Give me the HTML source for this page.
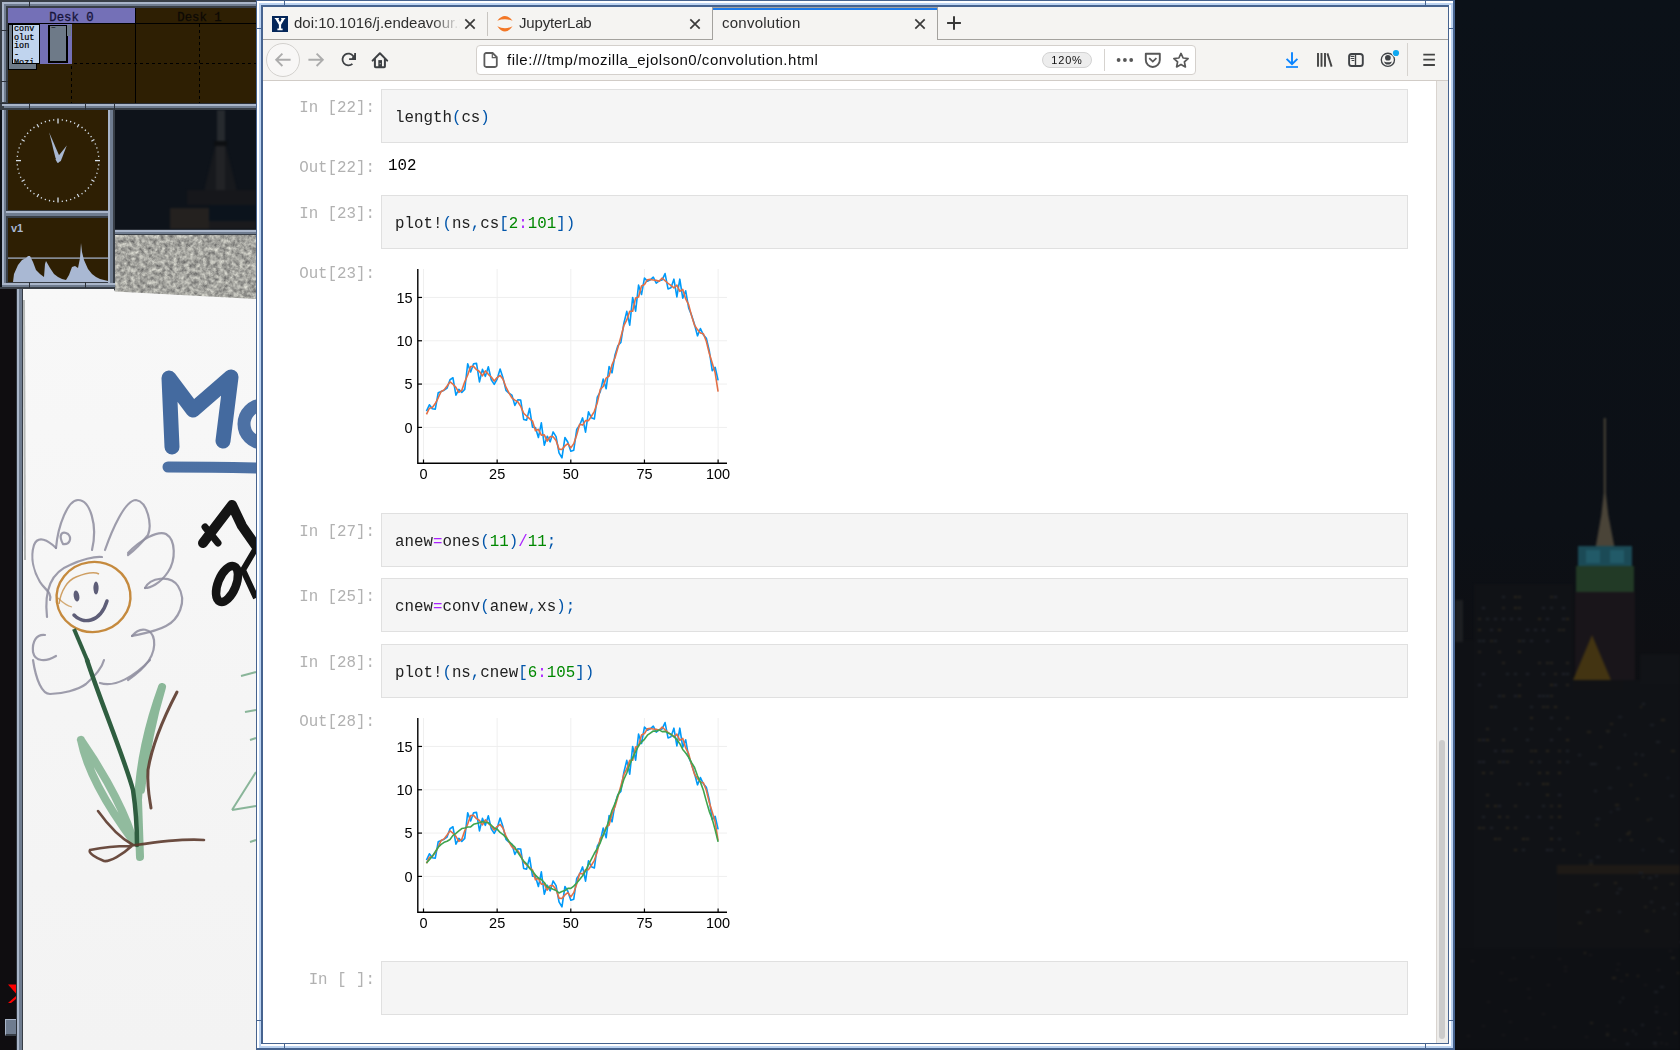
<!DOCTYPE html>
<html><head><meta charset="utf-8">
<style>
html,body{margin:0;padding:0;}
body{width:1680px;height:1050px;overflow:hidden;position:relative;background:#0b1017;font-family:"Liberation Sans",sans-serif;-webkit-font-smoothing:antialiased;}
body>div,#L>div{position:absolute;}
.mono{font-family:"Liberation Mono",monospace;}
.p,.ct,.tt,.ut,.zt{will-change:transform;}
.p{position:absolute;font-family:"Liberation Mono",monospace;font-size:15.8px;color:#b1b1b1;white-space:pre;text-align:right;width:120px;line-height:20px;}
.cb{position:absolute;left:381px;width:1025px;height:52px;background:#f5f5f5;border:1px solid #e0e0e0;}
.ct{position:absolute;left:395px;font-family:"Liberation Mono",monospace;font-size:15.8px;color:#212121;white-space:pre;line-height:20px;}
.tt{position:absolute;font-size:15px;color:#2e2e2e;white-space:nowrap;overflow:hidden;line-height:18px;}
.ut{position:absolute;font-size:15px;letter-spacing:0.51px;color:#0c0c0d;white-space:nowrap;line-height:18px;}
.zt{position:absolute;font-size:11px;letter-spacing:0.8px;color:#111;text-align:center;line-height:16px;}
.pu{color:#0055aa}.nu{color:#008800}.op{color:#aa22ff}
</style></head><body>
<div style="left:0px;top:0px;width:256px;height:1050px;background:#0c1016;"></div>
<div style="left:0px;top:0px;width:256px;height:110px;background:#383e46;"></div>
<div style="left:2px;top:2px;width:254px;height:2px;background:#a9b5c9;"></div>
<div style="left:2px;top:2px;width:2px;height:100px;background:#a9b5c9;"></div>
<div style="left:4px;top:4px;width:252px;height:2px;background:#6f7c8f;"></div>
<div style="left:4px;top:4px;width:2px;height:98px;background:#6f7c8f;"></div>
<div style="left:6px;top:6px;width:250px;height:2px;background:#383e46;"></div>
<div style="left:29px;top:1px;width:1px;height:6px;background:#2b3038;"></div>
<div style="left:1px;top:30px;width:7px;height:1px;background:#2b3038;"></div>
<div style="left:1px;top:81px;width:7px;height:1px;background:#2b3038;"></div>
<div style="left:8px;top:8px;width:248px;height:95px;background:#2e1f03;"></div>
<div style="left:8px;top:8px;width:127px;height:15px;background:#7470b7;"></div>
<div style="left:8px;top:23px;width:248px;height:1px;background:#000;"></div>
<div style="left:135px;top:8px;width:1px;height:95px;background:#000;"></div>
<div style="left:8px;top:9.5px;width:127px;text-align:center;font-family:'Liberation Mono',monospace;font-size:12.3px;line-height:16px;color:#17143a;-webkit-text-stroke:0.3px #17143a">Desk 0</div>
<div style="left:136px;top:9.5px;width:127px;text-align:center;font-family:'Liberation Mono',monospace;font-size:12.3px;line-height:16px;color:#0a0703;-webkit-text-stroke:0.3px #120d06">Desk 1</div>
<div style="left:71px;top:24px;width:1px;height:79px;background:repeating-linear-gradient(180deg,#000 0 3px,transparent 3px 6px);"></div>
<div style="left:199px;top:24px;width:1px;height:79px;background:repeating-linear-gradient(180deg,#000 0 3px,transparent 3px 6px);"></div>
<div style="left:8px;top:63px;width:248px;height:1px;background:repeating-linear-gradient(90deg,#000 0 3px,transparent 3px 6px);"></div>
<div style="left:39px;top:24px;width:33px;height:40px;background:#7470b7;"></div>
<div style="left:8px;top:24px;width:29px;height:46px;background:#000;"></div>
<div style="left:9px;top:25px;width:27px;height:44px;background:#6e7a88;"></div>
<div style="left:12px;top:24px;width:28px;height:40px;background:#000;"></div>
<div style="left:13px;top:25px;width:26px;height:38px;background:#c0d4ee;"></div>
<div style="left:14px;top:25px;width:26px;height:38px;overflow:hidden;font-family:'Liberation Mono',monospace;font-size:8.5px;line-height:8.6px;color:#000;white-space:pre;-webkit-text-stroke:0.2px #000">conv
olut
ion
-
Mozi</div>
<div style="left:48px;top:25px;width:20px;height:38px;background:#000;"></div>
<div style="left:50px;top:26px;width:16px;height:35px;background:#6e7a88;"></div>
<div style="left:67px;top:25px;width:4px;height:11px;background:#6e7a88;"></div>
<div style="left:51px;top:24px;font-size:8px;line-height:8px;color:#000">~</div>
<div style="left:0px;top:103px;width:256px;height:1px;background:#2b3038;"></div>
<div style="left:2px;top:104px;width:254px;height:2px;background:#a9b5c9;"></div>
<div style="left:4px;top:106px;width:252px;height:2px;background:#6f7c8f;"></div>
<div style="left:6px;top:108px;width:250px;height:2px;background:#383e46;"></div>
<div style="left:29px;top:103px;width:1px;height:7px;background:#2b3038;"></div>
<div style="left:85px;top:103px;width:1px;height:7px;background:#2b3038;"></div>
<div style="left:114px;top:103px;width:1px;height:7px;background:#2b3038;"></div>
<div style="left:2px;top:110px;width:2px;height:178px;background:#a9b5c9;"></div>
<div style="left:4px;top:110px;width:2px;height:178px;background:#6f7c8f;"></div>
<div style="left:6px;top:110px;width:2px;height:178px;background:#383e46;"></div>
<div style="left:8px;top:110px;width:100px;height:100px;background:#2e1f03;"></div>
<div style="left:108px;top:110px;width:2px;height:178px;background:#a9b5c9;"></div>
<div style="left:110px;top:110px;width:3px;height:178px;background:#6f7c8f;"></div>
<div style="left:113px;top:110px;width:2px;height:178px;background:#383e46;"></div>
<div style="left:8px;top:210px;width:100px;height:1px;background:#383e46;"></div>
<div style="left:6px;top:211px;width:102px;height:2px;background:#a9b5c9;"></div>
<div style="left:6px;top:213px;width:102px;height:3px;background:#6f7c8f;"></div>
<div style="left:8px;top:216px;width:100px;height:2px;background:#383e46;"></div>
<div style="left:8px;top:218px;width:100px;height:64px;background:#2e1f03;"></div>
<div style="left:8px;top:282px;width:100px;height:1px;background:#383e46;"></div>
<div style="left:2px;top:283px;width:113px;height:2px;background:#a9b5c9;"></div>
<div style="left:2px;top:285px;width:113px;height:2px;background:#6f7c8f;"></div>
<div style="left:0px;top:287px;width:115px;height:2px;background:#383e46;"></div>
<div style="left:29px;top:282px;width:1px;height:6px;background:#2b3038;"></div>
<div style="left:85px;top:282px;width:1px;height:6px;background:#2b3038;"></div>
<svg style="position:absolute;left:0;top:103px" width="115" height="115" viewBox="0 103 115 115">
<line x1="58.00" y1="123.60" x2="58.00" y2="118.60" stroke="#d6e0ec" stroke-width="1.3"/>
<line x1="62.20" y1="120.62" x2="62.35" y2="119.23" stroke="#d6e0ec" stroke-width="1.2"/>
<line x1="66.36" y1="121.28" x2="66.65" y2="119.91" stroke="#d6e0ec" stroke-width="1.2"/>
<line x1="70.42" y1="122.37" x2="70.86" y2="121.04" stroke="#d6e0ec" stroke-width="1.2"/>
<line x1="74.35" y1="123.88" x2="74.92" y2="122.60" stroke="#d6e0ec" stroke-width="1.2"/>
<line x1="77.25" y1="127.26" x2="79.00" y2="124.23" stroke="#d6e0ec" stroke-width="1.2"/>
<line x1="81.63" y1="128.08" x2="82.45" y2="126.94" stroke="#d6e0ec" stroke-width="1.2"/>
<line x1="84.90" y1="130.73" x2="85.84" y2="129.69" stroke="#d6e0ec" stroke-width="1.2"/>
<line x1="87.87" y1="133.70" x2="88.91" y2="132.76" stroke="#d6e0ec" stroke-width="1.2"/>
<line x1="90.52" y1="136.97" x2="91.66" y2="136.15" stroke="#d6e0ec" stroke-width="1.2"/>
<line x1="91.34" y1="141.35" x2="94.37" y2="139.60" stroke="#d6e0ec" stroke-width="1.2"/>
<line x1="94.72" y1="144.25" x2="96.00" y2="143.68" stroke="#d6e0ec" stroke-width="1.2"/>
<line x1="96.23" y1="148.18" x2="97.56" y2="147.74" stroke="#d6e0ec" stroke-width="1.2"/>
<line x1="97.32" y1="152.24" x2="98.69" y2="151.95" stroke="#d6e0ec" stroke-width="1.2"/>
<line x1="97.98" y1="156.40" x2="99.37" y2="156.25" stroke="#d6e0ec" stroke-width="1.2"/>
<line x1="95.00" y1="160.60" x2="100.00" y2="160.60" stroke="#d6e0ec" stroke-width="1.3"/>
<line x1="97.98" y1="164.80" x2="99.37" y2="164.95" stroke="#d6e0ec" stroke-width="1.2"/>
<line x1="97.32" y1="168.96" x2="98.69" y2="169.25" stroke="#d6e0ec" stroke-width="1.2"/>
<line x1="96.23" y1="173.02" x2="97.56" y2="173.46" stroke="#d6e0ec" stroke-width="1.2"/>
<line x1="94.72" y1="176.95" x2="96.00" y2="177.52" stroke="#d6e0ec" stroke-width="1.2"/>
<line x1="91.34" y1="179.85" x2="94.37" y2="181.60" stroke="#d6e0ec" stroke-width="1.2"/>
<line x1="90.52" y1="184.23" x2="91.66" y2="185.05" stroke="#d6e0ec" stroke-width="1.2"/>
<line x1="87.87" y1="187.50" x2="88.91" y2="188.44" stroke="#d6e0ec" stroke-width="1.2"/>
<line x1="84.90" y1="190.47" x2="85.84" y2="191.51" stroke="#d6e0ec" stroke-width="1.2"/>
<line x1="81.63" y1="193.12" x2="82.45" y2="194.26" stroke="#d6e0ec" stroke-width="1.2"/>
<line x1="77.25" y1="193.94" x2="79.00" y2="196.97" stroke="#d6e0ec" stroke-width="1.2"/>
<line x1="74.35" y1="197.32" x2="74.92" y2="198.60" stroke="#d6e0ec" stroke-width="1.2"/>
<line x1="70.42" y1="198.83" x2="70.86" y2="200.16" stroke="#d6e0ec" stroke-width="1.2"/>
<line x1="66.36" y1="199.92" x2="66.65" y2="201.29" stroke="#d6e0ec" stroke-width="1.2"/>
<line x1="62.20" y1="200.58" x2="62.35" y2="201.97" stroke="#d6e0ec" stroke-width="1.2"/>
<line x1="58.00" y1="197.60" x2="58.00" y2="202.60" stroke="#d6e0ec" stroke-width="1.3"/>
<line x1="53.80" y1="200.58" x2="53.65" y2="201.97" stroke="#d6e0ec" stroke-width="1.2"/>
<line x1="49.64" y1="199.92" x2="49.35" y2="201.29" stroke="#d6e0ec" stroke-width="1.2"/>
<line x1="45.58" y1="198.83" x2="45.14" y2="200.16" stroke="#d6e0ec" stroke-width="1.2"/>
<line x1="41.65" y1="197.32" x2="41.08" y2="198.60" stroke="#d6e0ec" stroke-width="1.2"/>
<line x1="38.75" y1="193.94" x2="37.00" y2="196.97" stroke="#d6e0ec" stroke-width="1.2"/>
<line x1="34.37" y1="193.12" x2="33.55" y2="194.26" stroke="#d6e0ec" stroke-width="1.2"/>
<line x1="31.10" y1="190.47" x2="30.16" y2="191.51" stroke="#d6e0ec" stroke-width="1.2"/>
<line x1="28.13" y1="187.50" x2="27.09" y2="188.44" stroke="#d6e0ec" stroke-width="1.2"/>
<line x1="25.48" y1="184.23" x2="24.34" y2="185.05" stroke="#d6e0ec" stroke-width="1.2"/>
<line x1="24.66" y1="179.85" x2="21.63" y2="181.60" stroke="#d6e0ec" stroke-width="1.2"/>
<line x1="21.28" y1="176.95" x2="20.00" y2="177.52" stroke="#d6e0ec" stroke-width="1.2"/>
<line x1="19.77" y1="173.02" x2="18.44" y2="173.46" stroke="#d6e0ec" stroke-width="1.2"/>
<line x1="18.68" y1="168.96" x2="17.31" y2="169.25" stroke="#d6e0ec" stroke-width="1.2"/>
<line x1="18.02" y1="164.80" x2="16.63" y2="164.95" stroke="#d6e0ec" stroke-width="1.2"/>
<line x1="21.00" y1="160.60" x2="16.00" y2="160.60" stroke="#d6e0ec" stroke-width="1.3"/>
<line x1="18.02" y1="156.40" x2="16.63" y2="156.25" stroke="#d6e0ec" stroke-width="1.2"/>
<line x1="18.68" y1="152.24" x2="17.31" y2="151.95" stroke="#d6e0ec" stroke-width="1.2"/>
<line x1="19.77" y1="148.18" x2="18.44" y2="147.74" stroke="#d6e0ec" stroke-width="1.2"/>
<line x1="21.28" y1="144.25" x2="20.00" y2="143.68" stroke="#d6e0ec" stroke-width="1.2"/>
<line x1="24.66" y1="141.35" x2="21.63" y2="139.60" stroke="#d6e0ec" stroke-width="1.2"/>
<line x1="25.48" y1="136.97" x2="24.34" y2="136.15" stroke="#d6e0ec" stroke-width="1.2"/>
<line x1="28.13" y1="133.70" x2="27.09" y2="132.76" stroke="#d6e0ec" stroke-width="1.2"/>
<line x1="31.10" y1="130.73" x2="30.16" y2="129.69" stroke="#d6e0ec" stroke-width="1.2"/>
<line x1="34.37" y1="128.08" x2="33.55" y2="126.94" stroke="#d6e0ec" stroke-width="1.2"/>
<line x1="38.75" y1="127.26" x2="37.00" y2="124.23" stroke="#d6e0ec" stroke-width="1.2"/>
<line x1="41.65" y1="123.88" x2="41.08" y2="122.60" stroke="#d6e0ec" stroke-width="1.2"/>
<line x1="45.58" y1="122.37" x2="45.14" y2="121.04" stroke="#d6e0ec" stroke-width="1.2"/>
<line x1="49.64" y1="121.28" x2="49.35" y2="119.91" stroke="#d6e0ec" stroke-width="1.2"/>
<line x1="53.80" y1="120.62" x2="53.65" y2="119.23" stroke="#d6e0ec" stroke-width="1.2"/>
<path d="M55.5 158 L49.2 132.5 L60 157.5 L58.5 163z" fill="#a9b8d2"/>
<path d="M55.5 159.5 L66.8 145.5 L60.8 161 L57.5 163z" fill="#a9b8d2"/>
</svg>
<svg style="position:absolute;left:0;top:218px" width="115" height="70" viewBox="0 218 115 70"><path d="M13 282 L14 274 L18 265 L22 260 L26 258 L28 256 L30 256 L33 262 L36 270 L40 274 L44 277 L45 264 L46 261 L50 268 L54 274 L58 277 L62 279 L66 280 L69 275 L72 267 L75 266 L78 268 L80 258 L81 243 L82 252 L84 260 L88 269 L92 274 L96 277 L100 279 L104 280 L108 281 L108 282z" fill="#a9b8d3"/><rect x="8" y="257.5" width="100" height="1.2" fill="#a9b8d3"/><text x="11" y="231.5" font-family="Liberation Sans" font-weight="bold" font-size="11" fill="#a9b8d3">v1</text></svg>
<div style="left:115px;top:110px;width:141px;height:119px;background:#0d131b;"></div>
<svg style="position:absolute;left:115px;top:110px" width="141" height="119" viewBox="115 110 141 119"><rect x="115" y="110" width="141" height="119" fill="#0e131a"/><g filter="url(#bl2)"><rect x="217" y="110" width="8" height="31" fill="#262a2e"/><rect x="214" y="141" width="13" height="5" fill="#0d0f12"/><path d="M215 146 L204 191 L237 191 L226 146z" fill="#17191d"/><path d="M216 146 h9 v45 h-9z" fill="#222326"/><rect x="187" y="190" width="69" height="15" fill="#16171b"/><rect x="170" y="208" width="39" height="21" fill="#24211f"/><rect x="209" y="205" width="47" height="16" fill="#0b131c"/><rect x="209" y="221" width="47" height="8" fill="#1a1a1d"/></g><defs><filter id="bl2" color-interpolation-filters="sRGB"><feGaussianBlur stdDeviation="0.8"/></filter></defs></svg>
<div style="left:115px;top:229px;width:141px;height:1px;background:#2b3038;"></div>
<div style="left:115px;top:230px;width:141px;height:2px;background:#a9b5c9;"></div>
<div style="left:115px;top:232px;width:141px;height:2px;background:#6f7c8f;"></div>
<div style="left:115px;top:234px;width:141px;height:1px;background:#383e46;"></div>
<svg style="position:absolute;left:115px;top:235px" width="141" height="66" viewBox="0 0 141 66"><filter id="grd" x="0" y="0" width="100%" height="100%" color-interpolation-filters="sRGB"><feTurbulence type="fractalNoise" baseFrequency="0.24" numOctaves="3" seed="5"/><feColorMatrix values="1 0 0 0 0  1 0 0 0 0  0.93 0 0 0 0  0 0 0 0 1"/><feComponentTransfer><feFuncR type="linear" slope="0.62" intercept="0.34"/><feFuncG type="linear" slope="0.62" intercept="0.34"/><feFuncB type="linear" slope="0.62" intercept="0.34"/></feComponentTransfer></filter><rect width="141" height="66" filter="url(#grd)"/></svg>
<div style="left:0px;top:289px;width:16px;height:761px;background:#0f0d10;"></div>
<div style="left:16px;top:289px;width:1px;height:761px;background:#2b3038;"></div>
<div style="left:17px;top:289px;width:2px;height:761px;background:#a9b5c9;"></div>
<div style="left:19px;top:289px;width:3px;height:761px;background:#6f7c8f;"></div>
<div style="left:22px;top:289px;width:1px;height:761px;background:#383e46;"></div>
<svg style="position:absolute;left:6px;top:982px" width="12" height="28" viewBox="0 0 12 28"><path d="M2 2.5H10V11.5z" fill="#f00"/><path d="M10 14L2 21H5L10 17z" fill="#f00"/></svg>
<div style="left:5px;top:1019px;width:11px;height:17px;background:#6f7c8f;border-top:1px solid #a9b5c9;border-left:1px solid #a9b5c9;border-bottom:2px solid #383e46;box-sizing:border-box"></div>
<svg style="position:absolute;left:23px;top:288px" width="233" height="762" viewBox="23 288 233 762"><defs><linearGradient id="pg" x1="0" y1="0" x2="0" y2="1"><stop offset="0" stop-color="#f8f8f8"/><stop offset=".55" stop-color="#f5f5f5"/><stop offset="1" stop-color="#f3f3f3"/></linearGradient></defs><path d="M23 289 H114 L115 291.5 L256 299 V1050 H23z" fill="url(#pg)"/><path d="M24 300 L25 560" stroke="#8a8f8c" stroke-width="2" opacity=".6"/><defs><filter id="soft" x="-5%" y="-5%" width="110%" height="110%" color-interpolation-filters="sRGB"><feGaussianBlur stdDeviation="0.7"/></filter></defs><g filter="url(#soft)"><path d="M172 447 L169 378 L193 410 L231 377 L223 441" fill="none" stroke="#3a629a" stroke-width="15" stroke-linejoin="round" stroke-linecap="round" opacity=".95"/>
<ellipse cx="263" cy="424" rx="19" ry="19" fill="none" stroke="#3a629a" stroke-width="13" opacity=".9"/>
<path d="M168 467 Q210 467 256 468" fill="none" stroke="#3a629a" stroke-width="11" stroke-linecap="round" opacity=".9"/>
<path d="M203 543 L232 505 L242 526 L256 546" fill="none" stroke="#141414" stroke-width="10" stroke-linejoin="round" stroke-linecap="round"/>
<path d="M205 527 L218 543" fill="none" stroke="#141414" stroke-width="7" stroke-linecap="round"/>
<ellipse cx="227" cy="584" rx="9" ry="19" transform="rotate(22 227 584)" fill="none" stroke="#141414" stroke-width="8.5"/>
<path d="M256 548 L243 570 L256 598" fill="none" stroke="#141414" stroke-width="6" stroke-linejoin="round"/>
<path d="M47 617 C44 590 52 572 70 565 C80 560 95 556 102 557" fill="none" stroke="#8d8c9e" stroke-width="2.2" stroke-linecap="round" opacity=".85"/>
<path d="M56 548 C58 525 68 500 78 500 C90 500 98 525 92 550" fill="none" stroke="#8d8c9e" stroke-width="2.2" stroke-linecap="round" opacity=".85"/>
<path d="M105 550 C112 530 125 500 136 500 C148 502 152 525 148 535 C140 545 132 552 128 555" fill="none" stroke="#8d8c9e" stroke-width="2.2" stroke-linecap="round" opacity=".85"/>
<path d="M128 553 C140 540 158 530 166 534 C176 540 176 560 168 572 C160 584 150 588 145 588" fill="none" stroke="#8d8c9e" stroke-width="2.2" stroke-linecap="round" opacity=".85"/>
<path d="M145 588 C150 578 170 574 178 586 C188 602 178 620 166 626 C155 632 140 634 132 636" fill="none" stroke="#8d8c9e" stroke-width="2.2" stroke-linecap="round" opacity=".85"/>
<path d="M132 636 C140 626 152 628 154 640 C156 655 146 668 128 680" fill="none" stroke="#8d8c9e" stroke-width="2.2" stroke-linecap="round" opacity=".85"/>
<path d="M56 548 C48 540 38 535 34 545 C30 558 34 572 40 582 C45 590 52 592 50 600" fill="none" stroke="#8d8c9e" stroke-width="2.2" stroke-linecap="round" opacity=".85"/>
<path d="M63 544 C58 535 62 530 68 534 C72 538 70 545 63 544" fill="none" stroke="#8d8c9e" stroke-width="2.2" stroke-linecap="round" opacity=".85"/>
<path d="M45 635 C36 634 32 642 33 652 C35 662 46 662 56 656" fill="none" stroke="#8d8c9e" stroke-width="2.2" stroke-linecap="round" opacity=".85"/>
<path d="M33 660 C36 680 42 694 50 694 C62 694 78 690 86 684 C95 676 102 668 104 660" fill="none" stroke="#8d8c9e" stroke-width="2.2" stroke-linecap="round" opacity=".85"/>
<path d="M100 683 C115 688 135 676 150 660" fill="none" stroke="#8d8c9e" stroke-width="2.2" stroke-linecap="round" opacity=".85"/>
<ellipse cx="93.5" cy="597" rx="37" ry="35" fill="none" stroke="#c58a3e" stroke-width="2.4" transform="rotate(-8 93.5 597)"/>
<path d="M59 604 C61 590 68 580 76 577 C86 573 95 572 99 574" fill="none" stroke="#c58a3e" stroke-width="1.5" opacity=".8"/>
<path d="M58 598 C64 604 68 606 72 607" fill="none" stroke="#c58a3e" stroke-width="1.2" opacity=".7"/>
<ellipse cx="76.5" cy="596" rx="2.8" ry="5.5" fill="#5e5e78" transform="rotate(-10 76.5 596)"/>
<ellipse cx="96" cy="588" rx="2.6" ry="6.5" fill="#5e5e78"/>
<path d="M74 615 C82 624 100 624 107 601" fill="none" stroke="#5e5e78" stroke-width="3.5" stroke-linecap="round"/>
<path d="M81 740 C88 775 110 810 134 842 M81 740 C95 760 120 800 132 836" fill="none" stroke="#78ad88" stroke-width="8" stroke-linecap="round" opacity=".8"/>
<path d="M162 687 C150 720 140 760 138 800 L140 857 M162 687 C155 710 146 750 141 790" fill="none" stroke="#78ad88" stroke-width="8" stroke-linecap="round" opacity=".85"/>
<path d="M87 660 C100 700 125 760 133 790 C136 810 137 830 137 845" fill="none" stroke="#2f5e40" stroke-width="4.5" stroke-linecap="round"/>
<path d="M74 629 L88 662" fill="none" stroke="#2f5e40" stroke-width="4"/>
<path d="M177 692 C165 715 152 745 148 770 C147 790 150 800 151 808" fill="none" stroke="#5c3a2c" stroke-width="3" stroke-linecap="round" opacity=".9"/>
<path d="M98 811 C108 825 120 838 133 845 C122 855 110 862 104 861 C96 858 88 853 90 850 C100 848 115 846 129 846 C150 843 180 838 204 840" fill="none" stroke="#5c3a2c" stroke-width="2.6" stroke-linecap="round" opacity=".9"/>
<path d="M241 676 L256 672 M245 712 L256 710 M250 740 L256 738 M232 810 L256 772 M232 810 L256 806 M250 842 L256 840" fill="none" stroke="#6ea582" stroke-width="2" opacity=".8"/></g></svg>
<svg style="position:absolute;left:1455px;top:0" width="225" height="1050" viewBox="1455 0 225 1050">
<defs><linearGradient id="sky" x1="0" y1="0" x2="0" y2="1"><stop offset="0" stop-color="#0b1118"/><stop offset=".5" stop-color="#0c1016"/><stop offset=".62" stop-color="#0e0f13"/><stop offset="1" stop-color="#0a0b0f"/></linearGradient><filter id="bl" x="-20%" y="-20%" width="140%" height="140%" color-interpolation-filters="sRGB"><feGaussianBlur stdDeviation="1.1"/></filter></defs>
<rect x="1455" y="0" width="225" height="1050" fill="url(#sky)"/>
<g filter="url(#bl)">
<rect x="1474" y="584" width="99" height="466" fill="#101216"/>
<rect x="1455" y="640" width="19" height="410" fill="#0f1115"/>
<rect x="1455" y="600" width="8" height="42" fill="#1d1f22"/>
<rect x="1573" y="680" width="107" height="370" fill="#101216"/>
<rect x="1640" y="654" width="40" height="30" fill="#111317"/>
<path d="M1603.8 418 h2 v75 l2.5 22 l6 31 h-18.5 l5.5 -31 l2.5 -22z" fill="#4a4438"/>
<rect x="1578" y="546" width="54" height="20" fill="#1b4a56"/>
<rect x="1586" y="550" width="14" height="13" fill="#225a68"/>
<rect x="1610" y="550" width="14" height="13" fill="#225a68"/>
<rect x="1576" y="566" width="58" height="26" fill="#223a26"/>
<rect x="1575" y="592" width="60" height="88" fill="#19151a"/>
<path d="M1573 680 L1592 635 L1611 680z" fill="#433412"/>
<rect x="1573" y="680" width="50" height="10" fill="#111215"/>
<rect x="1557" y="865" width="123" height="9" fill="#1e1a16"/>
<rect x="1557" y="874" width="123" height="74" fill="#111215"/>
<rect x="1455" y="948" width="225" height="102" fill="#0e1014"/>
<rect x="1502" y="596" width="3" height="2" fill="#1e2228"/>
<rect x="1514" y="596" width="3" height="2" fill="#2a251a"/>
<rect x="1518" y="596" width="3" height="2" fill="#26231d"/>
<rect x="1550" y="596" width="3" height="2" fill="#26231d"/>
<rect x="1554" y="596" width="3" height="2" fill="#20222a"/>
<rect x="1482" y="607" width="3" height="2" fill="#20222a"/>
<rect x="1502" y="607" width="3" height="2" fill="#26231d"/>
<rect x="1514" y="607" width="3" height="2" fill="#2a251a"/>
<rect x="1518" y="607" width="3" height="2" fill="#26231d"/>
<rect x="1542" y="607" width="3" height="2" fill="#20222a"/>
<rect x="1550" y="607" width="3" height="2" fill="#1e2228"/>
<rect x="1562" y="607" width="3" height="2" fill="#20222a"/>
<rect x="1478" y="618" width="3" height="2" fill="#26231d"/>
<rect x="1486" y="618" width="3" height="2" fill="#1e2228"/>
<rect x="1494" y="618" width="3" height="2" fill="#20222a"/>
<rect x="1502" y="618" width="3" height="2" fill="#1e2228"/>
<rect x="1510" y="618" width="3" height="2" fill="#20222a"/>
<rect x="1518" y="618" width="3" height="2" fill="#20222a"/>
<rect x="1538" y="618" width="3" height="2" fill="#2a251a"/>
<rect x="1546" y="618" width="3" height="2" fill="#20222a"/>
<rect x="1562" y="618" width="3" height="2" fill="#20222a"/>
<rect x="1566" y="618" width="3" height="2" fill="#2a251a"/>
<rect x="1478" y="629" width="3" height="2" fill="#2a251a"/>
<rect x="1490" y="629" width="3" height="2" fill="#20222a"/>
<rect x="1498" y="629" width="3" height="2" fill="#2a251a"/>
<rect x="1526" y="629" width="3" height="2" fill="#20222a"/>
<rect x="1534" y="629" width="3" height="2" fill="#20222a"/>
<rect x="1542" y="629" width="3" height="2" fill="#20222a"/>
<rect x="1558" y="629" width="3" height="2" fill="#26231d"/>
<rect x="1562" y="629" width="3" height="2" fill="#26231d"/>
<rect x="1478" y="640" width="3" height="2" fill="#1e2228"/>
<rect x="1482" y="640" width="3" height="2" fill="#1e2228"/>
<rect x="1490" y="640" width="3" height="2" fill="#26231d"/>
<rect x="1494" y="640" width="3" height="2" fill="#1e2228"/>
<rect x="1518" y="640" width="3" height="2" fill="#26231d"/>
<rect x="1522" y="640" width="3" height="2" fill="#1e2228"/>
<rect x="1530" y="640" width="3" height="2" fill="#20222a"/>
<rect x="1546" y="640" width="3" height="2" fill="#20222a"/>
<rect x="1478" y="651" width="3" height="2" fill="#26231d"/>
<rect x="1498" y="651" width="3" height="2" fill="#26231d"/>
<rect x="1518" y="651" width="3" height="2" fill="#2a251a"/>
<rect x="1502" y="662" width="3" height="2" fill="#26231d"/>
<rect x="1538" y="662" width="3" height="2" fill="#26231d"/>
<rect x="1546" y="662" width="3" height="2" fill="#26231d"/>
<rect x="1550" y="662" width="3" height="2" fill="#26231d"/>
<rect x="1566" y="662" width="3" height="2" fill="#26231d"/>
<rect x="1482" y="673" width="3" height="2" fill="#20222a"/>
<rect x="1506" y="673" width="3" height="2" fill="#1e2228"/>
<rect x="1514" y="673" width="3" height="2" fill="#1e2228"/>
<rect x="1526" y="673" width="3" height="2" fill="#20222a"/>
<rect x="1542" y="673" width="3" height="2" fill="#1e2228"/>
<rect x="1554" y="673" width="3" height="2" fill="#26231d"/>
<rect x="1562" y="673" width="3" height="2" fill="#20222a"/>
<rect x="1566" y="673" width="3" height="2" fill="#1e2228"/>
<rect x="1478" y="684" width="3" height="2" fill="#20222a"/>
<rect x="1518" y="684" width="3" height="2" fill="#26231d"/>
<rect x="1550" y="684" width="3" height="2" fill="#2a251a"/>
<rect x="1554" y="684" width="3" height="2" fill="#20222a"/>
<rect x="1566" y="684" width="3" height="2" fill="#26231d"/>
<rect x="1498" y="695" width="3" height="2" fill="#1e2228"/>
<rect x="1502" y="695" width="3" height="2" fill="#26231d"/>
<rect x="1514" y="695" width="3" height="2" fill="#20222a"/>
<rect x="1518" y="695" width="3" height="2" fill="#2a251a"/>
<rect x="1538" y="695" width="3" height="2" fill="#20222a"/>
<rect x="1542" y="695" width="3" height="2" fill="#1e2228"/>
<rect x="1546" y="695" width="3" height="2" fill="#1e2228"/>
<rect x="1550" y="695" width="3" height="2" fill="#26231d"/>
<rect x="1490" y="706" width="3" height="2" fill="#26231d"/>
<rect x="1494" y="706" width="3" height="2" fill="#1e2228"/>
<rect x="1530" y="706" width="3" height="2" fill="#1e2228"/>
<rect x="1542" y="706" width="3" height="2" fill="#26231d"/>
<rect x="1546" y="706" width="3" height="2" fill="#26231d"/>
<rect x="1554" y="706" width="3" height="2" fill="#2a251a"/>
<rect x="1530" y="717" width="3" height="2" fill="#2a251a"/>
<rect x="1550" y="717" width="3" height="2" fill="#20222a"/>
<rect x="1566" y="717" width="3" height="2" fill="#26231d"/>
<rect x="1486" y="728" width="3" height="2" fill="#26231d"/>
<rect x="1514" y="728" width="3" height="2" fill="#1e2228"/>
<rect x="1530" y="728" width="3" height="2" fill="#1e2228"/>
<rect x="1558" y="728" width="3" height="2" fill="#1e2228"/>
<rect x="1478" y="739" width="3" height="2" fill="#26231d"/>
<rect x="1482" y="739" width="3" height="2" fill="#20222a"/>
<rect x="1486" y="739" width="3" height="2" fill="#2a251a"/>
<rect x="1502" y="739" width="3" height="2" fill="#26231d"/>
<rect x="1526" y="739" width="3" height="2" fill="#1e2228"/>
<rect x="1550" y="739" width="3" height="2" fill="#20222a"/>
<rect x="1566" y="739" width="3" height="2" fill="#2a251a"/>
<rect x="1494" y="750" width="3" height="2" fill="#20222a"/>
<rect x="1502" y="750" width="3" height="2" fill="#20222a"/>
<rect x="1506" y="750" width="3" height="2" fill="#26231d"/>
<rect x="1510" y="750" width="3" height="2" fill="#26231d"/>
<rect x="1530" y="750" width="3" height="2" fill="#26231d"/>
<rect x="1534" y="750" width="3" height="2" fill="#2a251a"/>
<rect x="1546" y="750" width="3" height="2" fill="#2a251a"/>
<rect x="1558" y="750" width="3" height="2" fill="#26231d"/>
<rect x="1566" y="750" width="3" height="2" fill="#1e2228"/>
<rect x="1478" y="761" width="3" height="2" fill="#20222a"/>
<rect x="1482" y="761" width="3" height="2" fill="#20222a"/>
<rect x="1498" y="761" width="3" height="2" fill="#26231d"/>
<rect x="1502" y="761" width="3" height="2" fill="#1e2228"/>
<rect x="1506" y="761" width="3" height="2" fill="#26231d"/>
<rect x="1530" y="761" width="3" height="2" fill="#26231d"/>
<rect x="1538" y="761" width="3" height="2" fill="#1e2228"/>
<rect x="1558" y="761" width="3" height="2" fill="#26231d"/>
<rect x="1566" y="761" width="3" height="2" fill="#1e2228"/>
<rect x="1482" y="772" width="3" height="2" fill="#2a251a"/>
<rect x="1490" y="772" width="3" height="2" fill="#26231d"/>
<rect x="1538" y="772" width="3" height="2" fill="#2a251a"/>
<rect x="1546" y="772" width="3" height="2" fill="#2a251a"/>
<rect x="1558" y="772" width="3" height="2" fill="#2a251a"/>
<rect x="1518" y="783" width="3" height="2" fill="#26231d"/>
<rect x="1526" y="783" width="3" height="2" fill="#1e2228"/>
<rect x="1542" y="783" width="3" height="2" fill="#2a251a"/>
<rect x="1546" y="783" width="3" height="2" fill="#2a251a"/>
<rect x="1486" y="794" width="3" height="2" fill="#26231d"/>
<rect x="1546" y="794" width="3" height="2" fill="#2a251a"/>
<rect x="1558" y="794" width="3" height="2" fill="#20222a"/>
<rect x="1486" y="805" width="3" height="2" fill="#2a251a"/>
<rect x="1494" y="805" width="3" height="2" fill="#2a251a"/>
<rect x="1498" y="805" width="3" height="2" fill="#20222a"/>
<rect x="1514" y="805" width="3" height="2" fill="#26231d"/>
<rect x="1542" y="805" width="3" height="2" fill="#1e2228"/>
<rect x="1550" y="805" width="3" height="2" fill="#26231d"/>
<rect x="1558" y="805" width="3" height="2" fill="#2a251a"/>
<rect x="1482" y="816" width="3" height="2" fill="#1e2228"/>
<rect x="1498" y="816" width="3" height="2" fill="#2a251a"/>
<rect x="1506" y="816" width="3" height="2" fill="#26231d"/>
<rect x="1526" y="816" width="3" height="2" fill="#20222a"/>
<rect x="1538" y="816" width="3" height="2" fill="#20222a"/>
<rect x="1550" y="816" width="3" height="2" fill="#26231d"/>
<rect x="1558" y="816" width="3" height="2" fill="#2a251a"/>
<rect x="1478" y="827" width="3" height="2" fill="#2a251a"/>
<rect x="1482" y="827" width="3" height="2" fill="#26231d"/>
<rect x="1490" y="827" width="3" height="2" fill="#20222a"/>
<rect x="1506" y="827" width="3" height="2" fill="#2a251a"/>
<rect x="1514" y="827" width="3" height="2" fill="#26231d"/>
<rect x="1550" y="827" width="3" height="2" fill="#20222a"/>
<rect x="1494" y="838" width="3" height="2" fill="#2a251a"/>
<rect x="1498" y="838" width="3" height="2" fill="#26231d"/>
<rect x="1522" y="838" width="3" height="2" fill="#2a251a"/>
<rect x="1526" y="838" width="3" height="2" fill="#26231d"/>
<rect x="1550" y="838" width="3" height="2" fill="#2a251a"/>
<rect x="1558" y="838" width="3" height="2" fill="#1e2228"/>
<rect x="1514" y="849" width="3" height="2" fill="#2a251a"/>
<rect x="1522" y="849" width="3" height="2" fill="#1e2228"/>
<rect x="1546" y="849" width="3" height="2" fill="#20222a"/>
<rect x="1550" y="849" width="3" height="2" fill="#1e2228"/>
<rect x="1562" y="849" width="3" height="2" fill="#26231d"/>
<rect x="1635" y="1033" width="2" height="2" fill="#1b1e24"/>
<rect x="1636" y="798" width="3" height="2" fill="#22201b"/>
<rect x="1584" y="952" width="2" height="2" fill="#25211a"/>
<rect x="1578" y="922" width="4" height="2" fill="#22201b"/>
<rect x="1661" y="840" width="3" height="2" fill="#1d2026"/>
<rect x="1655" y="875" width="3" height="2" fill="#1b1e24"/>
<rect x="1612" y="977" width="4" height="2" fill="#25211a"/>
<rect x="1589" y="863" width="4" height="2" fill="#22201b"/>
<rect x="1640" y="706" width="2" height="2" fill="#25211a"/>
<rect x="1660" y="986" width="4" height="2" fill="#1b1e24"/>
<rect x="1642" y="876" width="2" height="2" fill="#22201b"/>
<rect x="1619" y="839" width="2" height="2" fill="#1d2026"/>
<rect x="1653" y="1042" width="4" height="2" fill="#1b1e24"/>
<rect x="1593" y="763" width="4" height="2" fill="#1b1e24"/>
<rect x="1606" y="1034" width="3" height="2" fill="#22201b"/>
<rect x="1607" y="731" width="2" height="2" fill="#1d2026"/>
<rect x="1671" y="957" width="4" height="2" fill="#22201b"/>
<rect x="1626" y="974" width="2" height="2" fill="#25211a"/>
<rect x="1596" y="818" width="4" height="2" fill="#1d2026"/>
<rect x="1650" y="901" width="3" height="2" fill="#1d2026"/>
<rect x="1594" y="790" width="3" height="2" fill="#1d2026"/>
<rect x="1641" y="1024" width="3" height="2" fill="#1b1e24"/>
<rect x="1626" y="833" width="4" height="2" fill="#25211a"/>
<rect x="1632" y="1030" width="2" height="2" fill="#1b1e24"/>
<rect x="1617" y="767" width="3" height="2" fill="#1d2026"/>
<rect x="1677" y="972" width="2" height="2" fill="#25211a"/>
<rect x="1644" y="774" width="3" height="2" fill="#22201b"/>
<rect x="1670" y="850" width="4" height="2" fill="#1d2026"/>
<rect x="1619" y="1001" width="2" height="2" fill="#1b1e24"/>
<rect x="1656" y="741" width="4" height="2" fill="#1d2026"/>
<rect x="1653" y="910" width="2" height="2" fill="#22201b"/>
<rect x="1635" y="753" width="2" height="2" fill="#1d2026"/>
<rect x="1661" y="719" width="4" height="2" fill="#25211a"/>
<rect x="1650" y="724" width="4" height="2" fill="#1b1e24"/>
<rect x="1624" y="1029" width="2" height="2" fill="#25211a"/>
<rect x="1658" y="838" width="3" height="2" fill="#22201b"/>
<rect x="1597" y="883" width="2" height="2" fill="#1b1e24"/>
<rect x="1674" y="1032" width="3" height="2" fill="#25211a"/>
<rect x="1618" y="888" width="4" height="2" fill="#1b1e24"/>
<rect x="1650" y="818" width="2" height="2" fill="#1d2026"/>
<rect x="1645" y="930" width="4" height="2" fill="#22201b"/>
<rect x="1622" y="997" width="2" height="2" fill="#1b1e24"/>
<rect x="1606" y="730" width="4" height="2" fill="#22201b"/>
<rect x="1597" y="909" width="4" height="2" fill="#25211a"/>
<rect x="1614" y="882" width="3" height="2" fill="#25211a"/>
<rect x="1654" y="887" width="3" height="2" fill="#22201b"/>
<rect x="1595" y="824" width="3" height="2" fill="#22201b"/>
<rect x="1608" y="787" width="4" height="2" fill="#1b1e24"/>
<rect x="1642" y="849" width="2" height="2" fill="#1b1e24"/>
<rect x="1586" y="911" width="4" height="2" fill="#1d2026"/>
<rect x="1641" y="754" width="3" height="2" fill="#1d2026"/>
<rect x="1579" y="854" width="2" height="2" fill="#22201b"/>
<rect x="1599" y="746" width="3" height="2" fill="#22201b"/>
<rect x="1618" y="716" width="4" height="2" fill="#1b1e24"/>
<rect x="1590" y="763" width="4" height="2" fill="#1d2026"/>
<rect x="1616" y="808" width="4" height="2" fill="#1b1e24"/>
<rect x="1577" y="832" width="2" height="2" fill="#25211a"/>
<rect x="1644" y="906" width="3" height="2" fill="#22201b"/>
<rect x="1610" y="811" width="2" height="2" fill="#1b1e24"/>
<rect x="1634" y="763" width="3" height="2" fill="#25211a"/>
<rect x="1662" y="907" width="3" height="2" fill="#1d2026"/>
<rect x="1655" y="1011" width="3" height="2" fill="#1d2026"/>
<rect x="1639" y="872" width="4" height="2" fill="#1d2026"/>
<rect x="1680" y="941" width="4" height="2" fill="#1d2026"/>
<rect x="1674" y="913" width="2" height="2" fill="#1d2026"/>
<rect x="1589" y="860" width="4" height="2" fill="#1b1e24"/>
<rect x="1610" y="723" width="3" height="2" fill="#25211a"/>
<rect x="1624" y="734" width="2" height="2" fill="#1d2026"/>
<rect x="1670" y="883" width="4" height="2" fill="#22201b"/>
<rect x="1671" y="750" width="4" height="2" fill="#25211a"/>
<rect x="1590" y="1022" width="3" height="2" fill="#22201b"/>
<rect x="1647" y="819" width="2" height="2" fill="#25211a"/>
<rect x="1594" y="884" width="3" height="2" fill="#22201b"/>
<rect x="1578" y="754" width="3" height="2" fill="#1d2026"/>
<rect x="1654" y="991" width="4" height="2" fill="#1b1e24"/>
<rect x="1637" y="975" width="2" height="2" fill="#22201b"/>
<rect x="1596" y="856" width="4" height="2" fill="#1d2026"/>
<rect x="1616" y="892" width="3" height="2" fill="#1d2026"/>
<rect x="1630" y="784" width="2" height="2" fill="#25211a"/>
<rect x="1642" y="703" width="3" height="2" fill="#1d2026"/>
<rect x="1676" y="903" width="3" height="2" fill="#1b1e24"/>
<rect x="1618" y="911" width="3" height="2" fill="#1b1e24"/>
<rect x="1626" y="1043" width="3" height="2" fill="#1b1e24"/>
<rect x="1587" y="731" width="4" height="2" fill="#25211a"/>
<rect x="1630" y="839" width="3" height="2" fill="#22201b"/>
<rect x="1670" y="795" width="4" height="2" fill="#1b1e24"/>
<rect x="1615" y="804" width="4" height="2" fill="#25211a"/>
<rect x="1667" y="777" width="2" height="2" fill="#1b1e24"/>
<rect x="1628" y="831" width="3" height="2" fill="#22201b"/>
<rect x="1648" y="877" width="4" height="2" fill="#1d2026"/>
<rect x="1527" y="988" width="3" height="2" fill="#161618"/>
<rect x="1512" y="957" width="3" height="2" fill="#161618"/>
<rect x="1660" y="1042" width="3" height="2" fill="#161618"/>
<rect x="1606" y="1032" width="3" height="2" fill="#161618"/>
<rect x="1553" y="1026" width="3" height="2" fill="#161618"/>
<rect x="1509" y="1021" width="3" height="2" fill="#161618"/>
<rect x="1585" y="1036" width="3" height="2" fill="#161618"/>
<rect x="1482" y="1025" width="3" height="2" fill="#161618"/>
<rect x="1487" y="1001" width="3" height="2" fill="#161618"/>
<rect x="1669" y="950" width="3" height="2" fill="#161618"/>
<rect x="1514" y="978" width="3" height="2" fill="#161618"/>
<rect x="1531" y="956" width="3" height="2" fill="#161618"/>
<rect x="1657" y="1027" width="3" height="2" fill="#161618"/>
<rect x="1547" y="984" width="3" height="2" fill="#161618"/>
<rect x="1589" y="954" width="3" height="2" fill="#161618"/>
<rect x="1467" y="1035" width="3" height="2" fill="#161618"/>
<rect x="1528" y="997" width="3" height="2" fill="#161618"/>
<rect x="1665" y="1043" width="3" height="2" fill="#161618"/>
<rect x="1564" y="970" width="3" height="2" fill="#161618"/>
<rect x="1525" y="1038" width="3" height="2" fill="#161618"/>
<rect x="1657" y="969" width="3" height="2" fill="#161618"/>
<rect x="1644" y="984" width="3" height="2" fill="#161618"/>
<rect x="1564" y="966" width="3" height="2" fill="#161618"/>
<rect x="1654" y="1045" width="3" height="2" fill="#161618"/>
<rect x="1504" y="1010" width="3" height="2" fill="#161618"/>
<rect x="1502" y="1034" width="3" height="2" fill="#161618"/>
<rect x="1471" y="960" width="3" height="2" fill="#161618"/>
<rect x="1620" y="980" width="3" height="2" fill="#161618"/>
<rect x="1658" y="1033" width="3" height="2" fill="#161618"/>
<rect x="1617" y="963" width="3" height="2" fill="#161618"/>
<rect x="1613" y="1039" width="3" height="2" fill="#161618"/>
<rect x="1558" y="958" width="3" height="2" fill="#161618"/>
<rect x="1509" y="979" width="3" height="2" fill="#161618"/>
<rect x="1616" y="969" width="3" height="2" fill="#161618"/>
<rect x="1500" y="972" width="3" height="2" fill="#161618"/>
<rect x="1606" y="1025" width="3" height="2" fill="#161618"/>
<rect x="1542" y="1013" width="3" height="2" fill="#161618"/>
<rect x="1655" y="1006" width="3" height="2" fill="#161618"/>
<rect x="1510" y="979" width="3" height="2" fill="#161618"/>
<rect x="1664" y="1013" width="3" height="2" fill="#161618"/>
</g>
</svg>
<div style="left:256px;top:0px;width:1199px;height:1050px;background:#46638f;"></div>
<div style="left:257px;top:1px;width:2px;height:1047px;background:#ffffff;"></div>
<div style="left:259px;top:3px;width:2px;height:1043px;background:#bcd3f1;"></div>
<div style="left:257px;top:1px;width:1196px;height:2px;background:#ffffff;"></div>
<div style="left:259px;top:3px;width:1192px;height:2px;background:#bcd3f1;"></div>
<div style="left:1449px;top:5px;width:2px;height:1039px;background:#ffffff;"></div>
<div style="left:1451px;top:3px;width:2px;height:1045px;background:#bcd3f1;"></div>
<div style="left:261px;top:1044px;width:1190px;height:2px;background:#ffffff;"></div>
<div style="left:259px;top:1046px;width:1194px;height:2px;background:#bcd3f1;"></div>
<div style="left:284px;top:1px;width:1px;height:6px;background:#46638f;"></div>
<div style="left:1425px;top:1px;width:1px;height:6px;background:#46638f;"></div>
<div style="left:284px;top:1043px;width:1px;height:7px;background:#46638f;"></div>
<div style="left:1425px;top:1043px;width:1px;height:7px;background:#46638f;"></div>
<div style="left:256px;top:28px;width:7px;height:1px;background:#46638f;"></div>
<div style="left:256px;top:1020px;width:7px;height:1px;background:#46638f;"></div>
<div style="left:1448px;top:28px;width:7px;height:1px;background:#46638f;"></div>
<div style="left:1448px;top:1020px;width:7px;height:1px;background:#46638f;"></div>
<div style="left:263px;top:7px;width:1185px;height:74px;background:#f5f4f2;"></div>
<div style="left:712px;top:7px;width:226px;height:1px;background:#a4a29e;"></div>
<div style="left:263px;top:39px;width:449px;height:1px;background:#a4a29e;"></div>
<div style="left:938px;top:39px;width:510px;height:1px;background:#a4a29e;"></div>
<div style="left:712px;top:7px;width:1px;height:33px;background:#a4a29e;"></div>
<div style="left:937px;top:7px;width:1px;height:33px;background:#a4a29e;"></div>
<div style="left:713px;top:8px;width:224px;height:2px;background:#1f7ae8;"></div>
<div style="left:487px;top:12px;width:1px;height:24px;background:#c8c5c1;"></div>
<div style="left:263px;top:80px;width:1185px;height:1px;background:#d1ccc7;"></div>
<div style="left:263px;top:81px;width:1185px;height:962px;background:#ffffff;"></div>
<svg style="position:absolute;left:272px;top:16px" width="16" height="16" viewBox="0 0 16 16"><rect width="16" height="16" fill="#042659"/><path d="M2.8 1.9H6.9V3.1H6.3L8 6.3L9.7 3.1H9.1V1.9H13.2V3.1H12.6L9.1 8.7V12.5H10.6V14.3H5.4V12.5H6.9V8.7L3.4 3.1H2.8z" fill="#fff"/></svg>
<div class="tt" style="left:294px;top:14px;width:166px;-webkit-mask-image:linear-gradient(90deg,#000 83%,transparent 100%)">doi:10.1016/j.endeavour.2018.</div>
<div class="tt" style="left:519px;top:14px;letter-spacing:-0.17px">JupyterLab</div>
<div class="tt" style="left:722px;top:14px;letter-spacing:0.24px">convolution</div>
<svg style="position:absolute;left:464px;top:18px" width="12" height="12" viewBox="0 0 12 12"><path d="M1.3 1.3L10.7 10.7M10.7 1.3L1.3 10.7" stroke="#3b3b3b" stroke-width="1.7"/></svg>
<svg style="position:absolute;left:689px;top:18px" width="12" height="12" viewBox="0 0 12 12"><path d="M1.3 1.3L10.7 10.7M10.7 1.3L1.3 10.7" stroke="#3b3b3b" stroke-width="1.7"/></svg>
<svg style="position:absolute;left:914px;top:18px" width="12" height="12" viewBox="0 0 12 12"><path d="M1.3 1.3L10.7 10.7M10.7 1.3L1.3 10.7" stroke="#3b3b3b" stroke-width="1.7"/></svg>
<svg style="position:absolute;left:946px;top:15px" width="16" height="16" viewBox="0 0 16 16"><path d="M8 1.2V14.8M1.1 8H14.9" stroke="#383838" stroke-width="2"/></svg>
<svg style="position:absolute;left:496px;top:15px" width="18" height="18" viewBox="0 0 18 18"><path d="M1.3 5.7Q8.95 -3.5 16.6 5.7Q8.95 2.9 1.3 5.7z" fill="#f37726"/><path d="M1.3 11.2Q8.95 21.8 16.6 11.2Q8.95 15.2 1.3 11.2z" fill="#f37726"/></svg>
<div style="left:266px;top:43px;width:34px;height:34px;border:1px solid #d3d1ce;border-radius:50%;background:#f8f7f6;box-sizing:border-box"></div>
<svg style="position:absolute;left:274px;top:51px" width="18" height="18" viewBox="0 0 18 18"><path d="M16.6 8.8H2.4M8.4 2.6L2.2 8.8L8.4 15" fill="none" stroke="#acacac" stroke-width="1.9"/></svg>
<svg style="position:absolute;left:307px;top:51px" width="18" height="18" viewBox="0 0 18 18"><path d="M1.4 8.8H15.6M9.6 2.6L15.8 8.8L9.6 15" fill="none" stroke="#acacac" stroke-width="1.9"/></svg>
<svg style="position:absolute;left:340px;top:52px" width="18" height="17" viewBox="0 0 18 17"><path d="M12.4 11.8A5.9 5.9 0 1 1 13.3 4.2" fill="none" stroke="#3d4044" stroke-width="1.8"/><path d="M15.1 1.1V7.1H9.1" fill="none" stroke="#3d4044" stroke-width="1.8"/><path d="M12.6 4.5L15.1 2.2V7.1H11.6z" fill="#3d4044"/></svg>
<svg style="position:absolute;left:371px;top:51px" width="18" height="18" viewBox="0 0 18 18"><path d="M1.6 9.6L8.9 2.2L16.2 9.6" fill="none" stroke="#3d4044" stroke-width="2" stroke-linejoin="round" stroke-linecap="round"/><path d="M3.9 7.6V15.4Q3.9 16.2 4.7 16.2H13.1Q13.9 16.2 13.9 15.4V7.6" fill="none" stroke="#3d4044" stroke-width="2"/><rect x="7.3" y="9.1" width="3.7" height="7" fill="#3d4044"/><rect x="8.7" y="12.2" width="1" height="1" fill="#d0d0d0"/></svg>
<div style="left:476px;top:45px;width:720px;height:30px;box-sizing:border-box;border:1px solid #d4d0cc;border-radius:4px;background:#fff"></div>
<svg style="position:absolute;left:483px;top:52px" width="16" height="16" viewBox="0 0 16 16"><path d="M3.2 1H9.6L13.8 5.2V13.2A1.8 1.8 0 0 1 12 15H3.2A1.8 1.8 0 0 1 1.4 13.2V2.8A1.8 1.8 0 0 1 3.2 1z" fill="none" stroke="#5c5c5c" stroke-width="1.8"/><path d="M9.3 1.4V5.6H13.5" fill="none" stroke="#5c5c5c" stroke-width="1.2"/></svg>
<div class="ut" style="left:507px;top:51px;">file:///tmp/mozilla_ejolson0/convolution.html</div>
<div style="left:1042px;top:52px;width:50px;height:16px;box-sizing:border-box;border:1px solid #d3d3d3;border-radius:8px;background:#ededed"></div>
<div class="zt" style="left:1042px;top:52px;width:50px;">120%</div>
<div style="left:1104px;top:49px;width:1px;height:22px;background:#d6d3cf;"></div>
<svg style="position:absolute;left:1115px;top:56px" width="20" height="8" viewBox="0 0 20 8"><circle cx="3.6" cy="4" r="1.9" fill="#575757"/><circle cx="9.9" cy="4" r="1.9" fill="#575757"/><circle cx="16.2" cy="4" r="1.9" fill="#575757"/></svg>
<svg style="position:absolute;left:1144px;top:52px" width="18" height="17" viewBox="0 0 18 17"><path d="M1.8 1.7H15.8V8A7 7 0 0 1 1.8 8z" fill="none" stroke="#575757" stroke-width="1.9" stroke-linejoin="round"/><path d="M5.2 6.2L8.8 9.6L12.4 6.2" fill="none" stroke="#575757" stroke-width="1.8"/></svg>
<svg style="position:absolute;left:1172px;top:52px" width="18" height="17" viewBox="0 0 18 17"><path d="M9 1.4L11.1 6.0L16.1 6.5L12.4 9.9L13.4 14.9L9 12.4L4.6 14.9L5.6 9.9L1.9 6.5L6.9 6.0z" fill="none" stroke="#575757" stroke-width="1.7" stroke-linejoin="round"/></svg>
<svg style="position:absolute;left:1284px;top:51px" width="16" height="18" viewBox="0 0 16 18"><path d="M8 1.2V13M2.6 7.8L8 13.2L13.4 7.8" fill="none" stroke="#0a84ff" stroke-width="1.9"/><path d="M2 16H14" stroke="#0a84ff" stroke-width="1.7"/></svg>
<svg style="position:absolute;left:1316px;top:51px" width="18" height="18" viewBox="0 0 18 18"><path d="M2 2V15.8M5.5 2V15.8M9 2V15.8M11.4 2.4L15.6 15.6" fill="none" stroke="#444" stroke-width="1.9"/></svg>
<svg style="position:absolute;left:1347px;top:52px" width="18" height="16" viewBox="0 0 18 16"><rect x="2.1" y="2" width="13.7" height="12" rx="2.6" fill="none" stroke="#3f4246" stroke-width="1.9"/><path d="M8.5 2.3V13.8" stroke="#3f4246" stroke-width="1.4"/><path d="M4 4.4H6.9M4 6.5H6.9M5 8.5H6.9" stroke="#3f4246" stroke-width="1.1" stroke-linecap="round"/></svg>
<svg style="position:absolute;left:1380px;top:48px" width="22" height="22" viewBox="0 0 22 22"><circle cx="7.9" cy="11.8" r="6.6" fill="none" stroke="#3f4246" stroke-width="1.35"/><circle cx="7.9" cy="9.75" r="2.85" fill="#3f4246"/><path d="M4.1 13.4Q7.9 15.3 11.8 13.4Q11.2 16.5 7.9 16.6Q4.7 16.5 4.1 13.4z" fill="#3f4246"/><circle cx="16" cy="5" r="4.2" fill="#f5f4f2"/><circle cx="16" cy="5" r="3.1" fill="#0fa8f0"/></svg>
<div style="left:1407px;top:43px;width:1px;height:33px;background:#d6d3cf;"></div>
<svg style="position:absolute;left:1421px;top:52px" width="16" height="16" viewBox="0 0 16 16"><path d="M2.3 2.6H13.9M2.3 7.7H13.9M2.3 13H13.9" stroke="#444" stroke-width="1.8"/></svg>
<div style="left:1436px;top:81px;width:12px;height:962px;background:#edecea;"></div>
<div style="left:1436px;top:81px;width:1px;height:962px;background:#d9d4cf;"></div>
<div style="left:1439px;top:740px;width:6px;height:299px;border-radius:3px;background:#cbcbcb"></div>
<div class="p" style="left:255px;top:98.2px">In [22]:</div>
<div class="cb" style="top:89px"></div><div class="ct" style="top:108px">length<span class="pu">(</span>cs<span class="pu">)</span></div>
<div class="p" style="left:255px;top:158.3px">Out[22]:</div>
<div class="ct" style="left:388px;top:156px;color:#000">102</div>
<div class="p" style="left:255px;top:204.2px">In [23]:</div>
<div class="cb" style="top:195px"></div><div class="ct" style="top:214px">plot!<span class="pu">(</span>ns<span class="pu">,</span>cs<span class="pu">[</span><span class="nu">2</span><span class="op">:</span><span class="nu">101</span><span class="pu">])</span></div>
<div class="p" style="left:255px;top:264.0px">Out[23]:</div>
<div class="p" style="left:255px;top:522.2px">In [27]:</div>
<div class="cb" style="top:513px"></div><div class="ct" style="top:532px">anew<span class="op">=</span>ones<span class="pu">(</span><span class="nu">11</span><span class="pu">)</span><span class="op">/</span><span class="nu">11</span><span class="pu">;</span></div>
<div class="p" style="left:255px;top:587.2px">In [25]:</div>
<div class="cb" style="top:578px"></div><div class="ct" style="top:597px">cnew<span class="op">=</span>conv<span class="pu">(</span>anew<span class="pu">,</span>xs<span class="pu">);</span></div>
<div class="p" style="left:255px;top:653.2px">In [28]:</div>
<div class="cb" style="top:644px"></div><div class="ct" style="top:663px">plot!<span class="pu">(</span>ns<span class="pu">,</span>cnew<span class="pu">[</span><span class="nu">6</span><span class="op">:</span><span class="nu">105</span><span class="pu">])</span></div>
<div class="p" style="left:255px;top:712.0px">Out[28]:</div>
<div class="p" style="left:255px;top:970.2px">In [ ]:</div>
<div class="cb" style="top:961px"></div>
<svg style="position:absolute;left:380px;top:255px;will-change:transform" width="360" height="235" viewBox="380 255 360 235">
<line x1="423.50" y1="269" x2="423.50" y2="463" stroke="#efefef" stroke-width="1"/>
<line x1="497.15" y1="269" x2="497.15" y2="463" stroke="#efefef" stroke-width="1"/>
<line x1="570.80" y1="269" x2="570.80" y2="463" stroke="#efefef" stroke-width="1"/>
<line x1="644.45" y1="269" x2="644.45" y2="463" stroke="#efefef" stroke-width="1"/>
<line x1="718.10" y1="269" x2="718.10" y2="463" stroke="#efefef" stroke-width="1"/>
<line x1="418" y1="427.40" x2="727" y2="427.40" stroke="#efefef" stroke-width="1"/>
<line x1="418" y1="384.08" x2="727" y2="384.08" stroke="#efefef" stroke-width="1"/>
<line x1="418" y1="340.77" x2="727" y2="340.77" stroke="#efefef" stroke-width="1"/>
<line x1="418" y1="297.45" x2="727" y2="297.45" stroke="#efefef" stroke-width="1"/>
<polyline fill="none" stroke="#009af9" stroke-width="1.6" stroke-linejoin="round" points="426.45,411.11 429.39,404.79 432.34,408.77 435.28,409.12 438.23,392.75 441.18,391.45 444.12,390.15 447.07,388.07 450.01,379.75 452.96,377.76 455.91,395.09 458.85,389.37 461.80,392.40 464.74,389.37 467.69,363.73 470.64,372.04 473.58,363.73 476.53,363.38 479.47,381.92 482.42,369.36 485.37,376.37 488.31,366.76 491.26,379.75 494.20,384.43 497.15,379.06 500.10,369.10 503.04,378.11 505.99,390.41 508.93,393.09 511.88,395.09 514.83,405.40 517.77,399.77 520.72,400.11 523.66,419.43 526.61,420.12 529.56,408.43 532.50,427.23 535.45,427.57 538.39,437.54 541.34,422.90 544.29,445.25 547.23,436.24 550.18,441.87 553.12,431.90 556.07,436.58 559.02,452.87 561.96,457.89 564.91,437.54 567.85,442.21 570.80,451.22 573.75,450.18 576.69,429.57 579.64,425.23 582.58,417.87 585.53,432.16 588.48,411.81 591.42,417.87 594.37,419.00 597.31,397.08 600.26,391.88 603.21,378.97 606.15,388.68 609.10,366.50 612.04,372.82 614.99,354.89 617.94,345.45 620.88,342.33 623.83,323.44 626.77,311.32 629.72,325.18 632.67,297.45 635.61,311.14 638.56,285.15 641.50,294.51 644.45,278.14 647.40,281.17 650.34,279.87 653.29,277.18 656.23,283.16 659.18,280.82 662.13,279.87 665.07,273.55 668.02,288.88 670.96,287.84 673.91,279.18 676.86,296.85 679.80,279.18 682.75,298.15 685.69,290.78 688.64,307.85 691.59,315.30 694.53,324.48 697.48,335.83 700.42,328.47 703.37,334.79 706.32,338.17 709.26,350.73 712.21,370.74 715.15,367.28 718.10,380.45"/>
<polyline fill="none" stroke="#e26f46" stroke-width="1.6" stroke-linejoin="round" points="426.45,414.43 429.39,408.23 432.34,407.56 435.28,403.55 438.23,397.77 441.18,391.45 444.12,389.89 447.07,385.99 450.01,381.86 452.96,384.20 455.91,387.41 458.85,392.29 461.80,390.38 464.74,381.83 467.69,375.05 470.64,366.50 473.58,366.38 476.53,369.68 479.47,371.55 482.42,375.88 485.37,370.83 488.31,374.30 491.26,376.98 494.20,381.08 497.15,377.53 500.10,375.42 503.04,379.20 505.99,387.20 508.93,392.86 511.88,397.86 514.83,400.08 517.77,401.76 520.72,406.44 523.66,413.22 526.61,415.99 529.56,418.59 532.50,421.08 535.45,430.78 538.39,429.33 541.34,435.23 544.29,434.79 547.23,441.12 550.18,436.67 553.12,436.78 556.07,440.45 559.02,449.12 561.96,449.43 564.91,445.88 567.85,443.66 570.80,447.87 573.75,443.66 576.69,434.99 579.64,424.22 582.58,425.09 585.53,420.61 588.48,420.61 591.42,416.22 594.37,411.32 597.31,402.65 600.26,389.31 603.21,386.51 606.15,378.05 609.10,376.00 612.04,364.74 614.99,357.72 617.94,347.56 620.88,337.07 623.83,325.70 626.77,319.98 629.72,311.32 632.67,311.26 635.61,297.92 638.56,296.94 641.50,285.93 644.45,284.60 647.40,279.72 650.34,279.41 653.29,280.07 656.23,280.39 659.18,281.28 662.13,278.08 665.07,280.76 668.02,283.42 670.96,285.30 673.91,287.95 676.86,285.07 679.80,291.39 682.75,289.37 685.69,298.93 688.64,304.65 691.59,315.88 694.53,325.21 697.48,329.59 700.42,333.03 703.37,333.81 706.32,341.23 709.26,353.22 712.21,362.92 715.15,372.82 718.10,391.71"/>
<path d="M417.8 269 V463.3 H727" fill="none" stroke="#000" stroke-width="1.4"/>
<line x1="417.8" y1="427.40" x2="422" y2="427.40" stroke="#000" stroke-width="1.2"/>
<line x1="417.8" y1="384.08" x2="422" y2="384.08" stroke="#000" stroke-width="1.2"/>
<line x1="417.8" y1="340.77" x2="422" y2="340.77" stroke="#000" stroke-width="1.2"/>
<line x1="417.8" y1="297.45" x2="422" y2="297.45" stroke="#000" stroke-width="1.2"/>
<line x1="423.50" y1="463.3" x2="423.50" y2="459.5" stroke="#000" stroke-width="1.2"/>
<line x1="497.15" y1="463.3" x2="497.15" y2="459.5" stroke="#000" stroke-width="1.2"/>
<line x1="570.80" y1="463.3" x2="570.80" y2="459.5" stroke="#000" stroke-width="1.2"/>
<line x1="644.45" y1="463.3" x2="644.45" y2="459.5" stroke="#000" stroke-width="1.2"/>
<line x1="718.10" y1="463.3" x2="718.10" y2="459.5" stroke="#000" stroke-width="1.2"/>
<text x="412.6" y="432.70" text-anchor="end" font-family="Liberation Sans" font-size="14.5" fill="#000">0</text>
<text x="412.6" y="389.38" text-anchor="end" font-family="Liberation Sans" font-size="14.5" fill="#000">5</text>
<text x="412.6" y="346.07" text-anchor="end" font-family="Liberation Sans" font-size="14.5" fill="#000">10</text>
<text x="412.6" y="302.75" text-anchor="end" font-family="Liberation Sans" font-size="14.5" fill="#000">15</text>
<text x="423.50" y="478.6" text-anchor="middle" font-family="Liberation Sans" font-size="14.5" fill="#000">0</text>
<text x="497.15" y="478.6" text-anchor="middle" font-family="Liberation Sans" font-size="14.5" fill="#000">25</text>
<text x="570.80" y="478.6" text-anchor="middle" font-family="Liberation Sans" font-size="14.5" fill="#000">50</text>
<text x="644.45" y="478.6" text-anchor="middle" font-family="Liberation Sans" font-size="14.5" fill="#000">75</text>
<text x="718.10" y="478.6" text-anchor="middle" font-family="Liberation Sans" font-size="14.5" fill="#000">100</text>
</svg>
<svg style="position:absolute;left:380px;top:704px;will-change:transform" width="360" height="235" viewBox="380 704 360 235">
<line x1="423.50" y1="718" x2="423.50" y2="912" stroke="#efefef" stroke-width="1"/>
<line x1="497.15" y1="718" x2="497.15" y2="912" stroke="#efefef" stroke-width="1"/>
<line x1="570.80" y1="718" x2="570.80" y2="912" stroke="#efefef" stroke-width="1"/>
<line x1="644.45" y1="718" x2="644.45" y2="912" stroke="#efefef" stroke-width="1"/>
<line x1="718.10" y1="718" x2="718.10" y2="912" stroke="#efefef" stroke-width="1"/>
<line x1="418" y1="876.40" x2="727" y2="876.40" stroke="#efefef" stroke-width="1"/>
<line x1="418" y1="833.09" x2="727" y2="833.09" stroke="#efefef" stroke-width="1"/>
<line x1="418" y1="789.77" x2="727" y2="789.77" stroke="#efefef" stroke-width="1"/>
<line x1="418" y1="746.45" x2="727" y2="746.45" stroke="#efefef" stroke-width="1"/>
<polyline fill="none" stroke="#009af9" stroke-width="1.6" stroke-linejoin="round" points="426.45,860.11 429.39,853.79 432.34,857.77 435.28,858.12 438.23,841.75 441.18,840.45 444.12,839.15 447.07,837.07 450.01,828.75 452.96,826.76 455.91,844.09 458.85,838.37 461.80,841.40 464.74,838.37 467.69,812.73 470.64,821.04 473.58,812.73 476.53,812.38 479.47,830.92 482.42,818.36 485.37,825.37 488.31,815.76 491.26,828.75 494.20,833.43 497.15,828.06 500.10,818.10 503.04,827.11 505.99,839.41 508.93,842.09 511.88,844.09 514.83,854.40 517.77,848.77 520.72,849.11 523.66,868.43 526.61,869.12 529.56,857.43 532.50,876.23 535.45,876.57 538.39,886.54 541.34,871.90 544.29,894.25 547.23,885.24 550.18,890.87 553.12,880.90 556.07,885.58 559.02,901.87 561.96,906.89 564.91,886.54 567.85,891.21 570.80,900.22 573.75,899.18 576.69,878.57 579.64,874.23 582.58,866.87 585.53,881.16 588.48,860.81 591.42,866.87 594.37,868.00 597.31,846.08 600.26,840.88 603.21,827.97 606.15,837.68 609.10,815.50 612.04,821.82 614.99,803.89 617.94,794.45 620.88,791.33 623.83,772.44 626.77,760.32 629.72,774.18 632.67,746.45 635.61,760.14 638.56,734.15 641.50,743.51 644.45,727.14 647.40,730.17 650.34,728.87 653.29,726.18 656.23,732.16 659.18,729.82 662.13,728.87 665.07,722.55 668.02,737.88 670.96,736.84 673.91,728.18 676.86,745.85 679.80,728.18 682.75,747.15 685.69,739.78 688.64,756.85 691.59,764.30 694.53,773.48 697.48,784.83 700.42,777.47 703.37,783.79 706.32,787.17 709.26,799.73 712.21,819.74 715.15,816.28 718.10,829.45"/>
<polyline fill="none" stroke="#e26f46" stroke-width="1.6" stroke-linejoin="round" points="426.45,863.43 429.39,857.23 432.34,856.56 435.28,852.55 438.23,846.77 441.18,840.45 444.12,838.89 447.07,834.99 450.01,830.86 452.96,833.20 455.91,836.41 458.85,841.29 461.80,839.38 464.74,830.83 467.69,824.05 470.64,815.50 473.58,815.38 476.53,818.68 479.47,820.55 482.42,824.88 485.37,819.83 488.31,823.30 491.26,825.98 494.20,830.08 497.15,826.53 500.10,824.42 503.04,828.20 505.99,836.20 508.93,841.86 511.88,846.86 514.83,849.08 517.77,850.76 520.72,855.44 523.66,862.22 526.61,864.99 529.56,867.59 532.50,870.08 535.45,879.78 538.39,878.33 541.34,884.23 544.29,883.79 547.23,890.12 550.18,885.67 553.12,885.78 556.07,889.45 559.02,898.12 561.96,898.43 564.91,894.88 567.85,892.66 570.80,896.87 573.75,892.66 576.69,883.99 579.64,873.22 582.58,874.09 585.53,869.61 588.48,869.61 591.42,865.22 594.37,860.32 597.31,851.65 600.26,838.31 603.21,835.51 606.15,827.05 609.10,825.00 612.04,813.74 614.99,806.72 617.94,796.56 620.88,786.07 623.83,774.70 626.77,768.98 629.72,760.32 632.67,760.26 635.61,746.92 638.56,745.94 641.50,734.93 644.45,733.60 647.40,728.72 650.34,728.41 653.29,729.07 656.23,729.39 659.18,730.28 662.13,727.08 665.07,729.76 668.02,732.42 670.96,734.30 673.91,736.95 676.86,734.07 679.80,740.39 682.75,738.37 685.69,747.93 688.64,753.65 691.59,764.88 694.53,774.21 697.48,778.59 700.42,782.03 703.37,782.81 706.32,790.23 709.26,802.22 712.21,811.92 715.15,821.82 718.10,840.71"/>
<polyline fill="none" stroke="#3ea44e" stroke-width="1.6" stroke-linejoin="round" points="426.45,863.09 429.39,859.70 432.34,856.13 435.28,851.80 438.23,847.28 441.18,844.35 444.12,842.37 447.07,841.24 450.01,839.48 452.96,835.35 455.91,833.47 458.85,830.95 461.80,828.52 464.74,827.96 467.69,827.01 470.64,826.89 473.58,824.31 476.53,823.44 479.47,822.71 482.42,821.78 485.37,822.26 488.31,822.82 491.26,825.24 494.20,827.94 497.15,829.14 500.10,832.42 503.04,834.54 505.99,837.57 508.93,841.18 511.88,844.43 514.83,847.10 517.77,852.38 520.72,856.88 523.66,861.16 526.61,863.87 529.56,868.43 532.50,871.23 535.45,875.06 538.39,877.95 541.34,879.51 544.29,882.49 547.23,886.98 550.18,887.92 553.12,889.25 556.07,890.50 559.02,892.98 561.96,891.55 564.91,890.55 567.85,888.37 570.80,888.39 573.75,886.14 576.69,882.96 579.64,879.42 582.58,875.75 585.53,871.17 588.48,864.60 591.42,859.01 594.37,853.28 597.31,848.51 600.26,842.79 603.21,834.90 606.15,828.59 609.10,820.00 612.04,810.21 614.99,803.68 617.94,795.09 620.88,788.93 623.83,779.52 626.77,772.97 629.72,764.36 632.67,757.66 635.61,751.70 638.56,745.78 641.50,742.12 644.45,739.34 647.40,735.22 650.34,733.05 653.29,731.03 656.23,731.27 659.18,729.88 662.13,731.58 665.07,731.40 668.02,733.06 670.96,734.30 673.91,736.54 676.86,739.67 679.80,743.73 682.75,749.39 685.69,752.99 688.64,757.26 691.59,762.62 694.53,767.52 697.48,775.85 700.42,782.13 703.37,790.28 706.32,801.15 709.26,811.34 712.21,819.05 715.15,829.88 718.10,841.92"/>
<path d="M417.8 718 V912.3 H727" fill="none" stroke="#000" stroke-width="1.4"/>
<line x1="417.8" y1="876.40" x2="422" y2="876.40" stroke="#000" stroke-width="1.2"/>
<line x1="417.8" y1="833.09" x2="422" y2="833.09" stroke="#000" stroke-width="1.2"/>
<line x1="417.8" y1="789.77" x2="422" y2="789.77" stroke="#000" stroke-width="1.2"/>
<line x1="417.8" y1="746.45" x2="422" y2="746.45" stroke="#000" stroke-width="1.2"/>
<line x1="423.50" y1="912.3" x2="423.50" y2="908.5" stroke="#000" stroke-width="1.2"/>
<line x1="497.15" y1="912.3" x2="497.15" y2="908.5" stroke="#000" stroke-width="1.2"/>
<line x1="570.80" y1="912.3" x2="570.80" y2="908.5" stroke="#000" stroke-width="1.2"/>
<line x1="644.45" y1="912.3" x2="644.45" y2="908.5" stroke="#000" stroke-width="1.2"/>
<line x1="718.10" y1="912.3" x2="718.10" y2="908.5" stroke="#000" stroke-width="1.2"/>
<text x="412.6" y="881.70" text-anchor="end" font-family="Liberation Sans" font-size="14.5" fill="#000">0</text>
<text x="412.6" y="838.38" text-anchor="end" font-family="Liberation Sans" font-size="14.5" fill="#000">5</text>
<text x="412.6" y="795.07" text-anchor="end" font-family="Liberation Sans" font-size="14.5" fill="#000">10</text>
<text x="412.6" y="751.75" text-anchor="end" font-family="Liberation Sans" font-size="14.5" fill="#000">15</text>
<text x="423.50" y="927.6" text-anchor="middle" font-family="Liberation Sans" font-size="14.5" fill="#000">0</text>
<text x="497.15" y="927.6" text-anchor="middle" font-family="Liberation Sans" font-size="14.5" fill="#000">25</text>
<text x="570.80" y="927.6" text-anchor="middle" font-family="Liberation Sans" font-size="14.5" fill="#000">50</text>
<text x="644.45" y="927.6" text-anchor="middle" font-family="Liberation Sans" font-size="14.5" fill="#000">75</text>
<text x="718.10" y="927.6" text-anchor="middle" font-family="Liberation Sans" font-size="14.5" fill="#000">100</text>
</svg>
</body></html>
